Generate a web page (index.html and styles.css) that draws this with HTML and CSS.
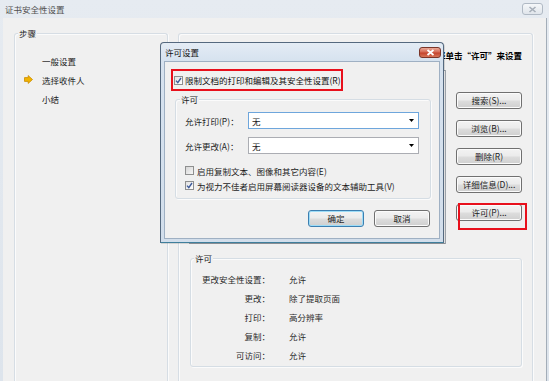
FILE: index.html
```html
<!DOCTYPE html>
<html lang="zh-CN">
<head>
<meta charset="utf-8">
<title>证书安全性设置</title>
<link rel="stylesheet" href="styles.css">
</head>
<body>
<div class="window">
  <div class="titlebar">
    <span class="title">证书安全性设置</span>
    <span class="wclose"><svg width="9" height="7" viewBox="0 0 9 7"><path d="M1.5 1L7.5 6M7.5 1L1.5 6" stroke="#a7afb9" stroke-width="1.6" fill="none"/></svg></span>
  </div>
  <div class="client">
    <div class="panel left">
      <span class="legend">步骤</span>
      <ul class="steps">
        <li><span class="marker"></span>一般设置</li>
        <li><span class="marker"><svg width="9" height="9" viewBox="0 0 9 9"><path d="M0.5 2.6H4.2V0.6L8.5 4.5L4.2 8.4V6.4H0.5Z" fill="#f2b400" stroke="#c98b00" stroke-width="0.8"/></svg></span>选择收件人</li>
        <li><span class="marker"></span>小结</li>
      </ul>
    </div>
    <div class="panel right">
      <div class="hint">择单击“许可”来设置</div>
      <div class="mainrow">
        <div class="listbox"></div>
        <div class="btncol">
          <button class="btn">搜索(S)...</button>
          <button class="btn">浏览(B)...</button>
          <button class="btn">删除(R)</button>
          <button class="btn">详细信息(D)...</button>
          <div class="hl"><button class="btn">许可(P)...</button></div>
        </div>
      </div>
      <div class="group perm">
        <span class="legend">许可</span>
        <div class="kv"><span class="k">更改安全性设置：</span><span class="v">允许</span></div>
        <div class="kv"><span class="k">更改：</span><span class="v">除了提取页面</span></div>
        <div class="kv"><span class="k">打印：</span><span class="v">高分辨率</span></div>
        <div class="kv"><span class="k">复制：</span><span class="v">允许</span></div>
        <div class="kv"><span class="k">可访问：</span><span class="v">允许</span></div>
      </div>
    </div>
  </div>
</div>

<div class="dialog">
  <div class="dtitle">许可设置</div>
  <span class="dclose"><svg width="9" height="7" viewBox="0 0 9 7"><path d="M1.5 1L7.5 6M7.5 1L1.5 6" stroke="#ffffff" stroke-width="1.8" fill="none"/></svg></span>
  <div class="dclient">
    <div class="redbox">
      <span class="cb on"><svg width="7" height="7" viewBox="0 0 7 7"><path d="M1 3.6L2.8 5.6L6 1" stroke="#3d5a9a" stroke-width="1.4" fill="none"/></svg></span>
      <span>限制文档的打印和编辑及其安全性设置(R)</span>
    </div>
    <div class="group dgroup">
      <span class="legend">许可</span>
      <div class="frow">
        <span class="flabel">允许打印(P)：</span>
        <div class="combo focus"><span class="ctext">无</span><span class="drop"><svg width="5" height="3" viewBox="0 0 5 3"><path d="M0 0H5L2.5 3Z" fill="#000"/></svg></span></div>
      </div>
      <div class="frow second">
        <span class="flabel">允许更改(A)：</span>
        <div class="combo"><span class="ctext">无</span><span class="drop"><svg width="5" height="3" viewBox="0 0 5 3"><path d="M0 0H5L2.5 3Z" fill="#000"/></svg></span></div>
      </div>
      <div class="crow first"><span class="cb"></span><span>启用复制文本、图像和其它内容(E)</span></div>
      <div class="crow"><span class="cb on"><svg width="7" height="7" viewBox="0 0 7 7"><path d="M1 3.6L2.8 5.6L6 1" stroke="#3d5a9a" stroke-width="1.4" fill="none"/></svg></span><span>为视力不佳者启用屏幕阅读器设备的文本辅助工具(V)</span></div>
    </div>
    <div class="dbtns">
      <button class="btn dbtn default">确定</button>
      <button class="btn dbtn">取消</button>
    </div>
  </div>
</div>
</body>
</html>
```

FILE: styles.css
```css
* { box-sizing: border-box; margin: 0; padding: 0; }
html, body { width: 549px; height: 381px; overflow: hidden; }
body {
  position: relative;
  background: #f0f0f0;
  font-family: "Noto Sans CJK SC", "Noto Sans", sans-serif;
  font-size: 8.5px;
  color: #1c1c1c;
}

/* background window */
.window {
  width: 549px;
  height: 381px;
  display: flex;
  flex-direction: column;
  background: linear-gradient(#e6ebf1, #dde4ec);
}
.titlebar {
  flex: none;
  height: 18px;
  display: flex;
  align-items: center;
  justify-content: space-between;
  padding: 0 6px 0 5px;
}
.title { color: #505050; line-height: 12px; }
.wclose {
  width: 21px;
  height: 12px;
  border: 1px solid #b0b9c4;
  border-radius: 3px;
  background: linear-gradient(#f5f7f9, #e0e5eb);
  display: flex;
  align-items: center;
  justify-content: center;
}
.client {
  flex: 1;
  min-height: 0;
  margin: 0 2px 0 3px;
  background: #f0f0f0;
  border-right: 1px solid #a3adb8;
  display: flex;
  gap: 10px;
  padding: 15px 0 0 11px;
}
.panel {
  position: relative;
  flex: none;
  border: 1px solid #d6dde4;
  border-bottom: 0;
  border-radius: 3px 3px 0 0;
  box-shadow: inset 1px 1px 0 #fbfbfb, 1px 0 0 #fbfbfb;
}
.left { width: 154px; }
.right { width: 355px; padding: 15px 10px 0 10px; }

.legend {
  position: absolute;
  top: -6px;
  left: 3px;
  padding: 0 1px;
  line-height: 11px;
  background: #f0f0f0;
  color: #1c1c1c;
}

.steps { list-style: none; padding-top: 17px; }
.steps li { display: flex; align-items: center; height: 19px; }
.marker { width: 27px; flex: none; display: flex; align-items: center; padding-left: 9px; }

.hint { height: 12px; line-height: 12px; text-align: right; color: #000; font-weight: 600; }
.mainrow { display: flex; gap: 10px; margin-top: 9px; align-items: flex-start; }
.listbox { width: 257px; height: 174px; border: 1px solid #9ca2a9; background: #fff; flex: none; }
.btncol { display: flex; flex-direction: column; gap: 11px; margin-top: 22px; }

.btn {
  width: 66px;
  height: 17px;
  border: 1px solid #707070;
  border-radius: 3px;
  background: linear-gradient(#f3f3f3 0%, #ebebeb 48%, #dddddd 52%, #cfcfcf 100%);
  box-shadow: inset 0 0 0 1px #fbfbfb;
  font-family: inherit;
  font-size: 8.5px;
  color: #1c1c1c;
  line-height: 15px;
  padding: 0;
  text-align: center;
}
.hl { position: relative; width: 66px; height: 17px; }
.hl::after {
  content: "";
  position: absolute;
  left: 2px;
  top: -1px;
  width: 65px;
  height: 23px;
  border: 2px solid #e8101c;
}

.group {
  position: relative;
  border: 1px solid #d5dde4;
  border-radius: 3px;
  box-shadow: inset 1px 1px 0 #fbfbfb, 1px 1px 0 #fbfbfb;
}
.perm { margin: 14px 0 0 1px; width: 332px; height: 109px; padding-top: 10px; }
.kv { display: flex; align-items: center; height: 19px; color: #2a2a2a; }
.k { width: 79px; text-align: right; }
.v { margin-left: 19px; }

/* dialog */
.dialog {
  position: absolute;
  left: 160px;
  top: 42px;
  width: 284px;
  height: 201px;
  border: 1px solid #55697f;
  border-bottom-color: #3f7f9c;
  border-radius: 4px 4px 0 0;
  background: linear-gradient(#e4ecf5, #d6e2ef 18px, #d2deeb);
  box-shadow: 1px 1px 0 rgba(0,0,0,0.12);
}
.dtitle { height: 18px; line-height: 18px; padding-left: 4px; color: #111; }
.dclose {
  position: absolute;
  top: 4px;
  right: 2px;
  width: 22px;
  height: 11px;
  border: 1px solid #7a3529;
  border-radius: 3px;
  background: linear-gradient(#e9a897 0%, #d56a55 45%, #c4432d 55%, #d77659 100%);
  display: flex;
  align-items: center;
  justify-content: center;
}
.dclient {
  margin: 0 3px;
  height: 178px;
  border: 1px solid #9fb0c3;
  background: #f0f0f0;
  padding: 7px 9px 0 6px;
}
.redbox {
  display: flex;
  align-items: center;
  width: 172px;
  height: 22px;
  border: 2px solid #e8101c;
  padding-left: 1px;
  color: #111;
}
.redbox .cb { margin-right: 2px; }
.cb {
  width: 9px;
  height: 9px;
  flex: none;
  border: 1px solid #8e8f8f;
  background: linear-gradient(135deg, #d6d6d6, #f6f6f6);
  margin-right: 3px;
  display: flex;
  align-items: center;
  justify-content: center;
}
.cb.on { background: linear-gradient(135deg, #e2e2e2, #ffffff); }

.dgroup { margin: 8px 0 0 4px; width: 256px; height: 100px; padding: 12px 0 0 9px; }
.dgroup .legend { left: 4px; top: -6px; }
.frow { display: flex; align-items: center; }
.frow.second { margin-top: 8px; }
.flabel { width: 63px; flex: none; }
.combo {
  width: 171px;
  height: 17px;
  border: 1px solid #abadb3;
  background: #fff;
  display: flex;
  align-items: center;
  padding-left: 3px;
}
.combo.focus { border-color: #6ea6dc; }
.ctext { flex: 1; }
.drop { width: 14px; height: 100%; display: flex; align-items: center; justify-content: center; }
.crow { display: flex; align-items: center; height: 15px; }
.crow.first { margin-top: 9px; }

.dbtns { display: flex; justify-content: flex-end; gap: 10px; margin-top: 11px; }
.dbtn { width: 56px; }
.dbtn.default { border-color: #3c7fb1; box-shadow: inset 0 0 0 1px #9ddcf7; }
```
